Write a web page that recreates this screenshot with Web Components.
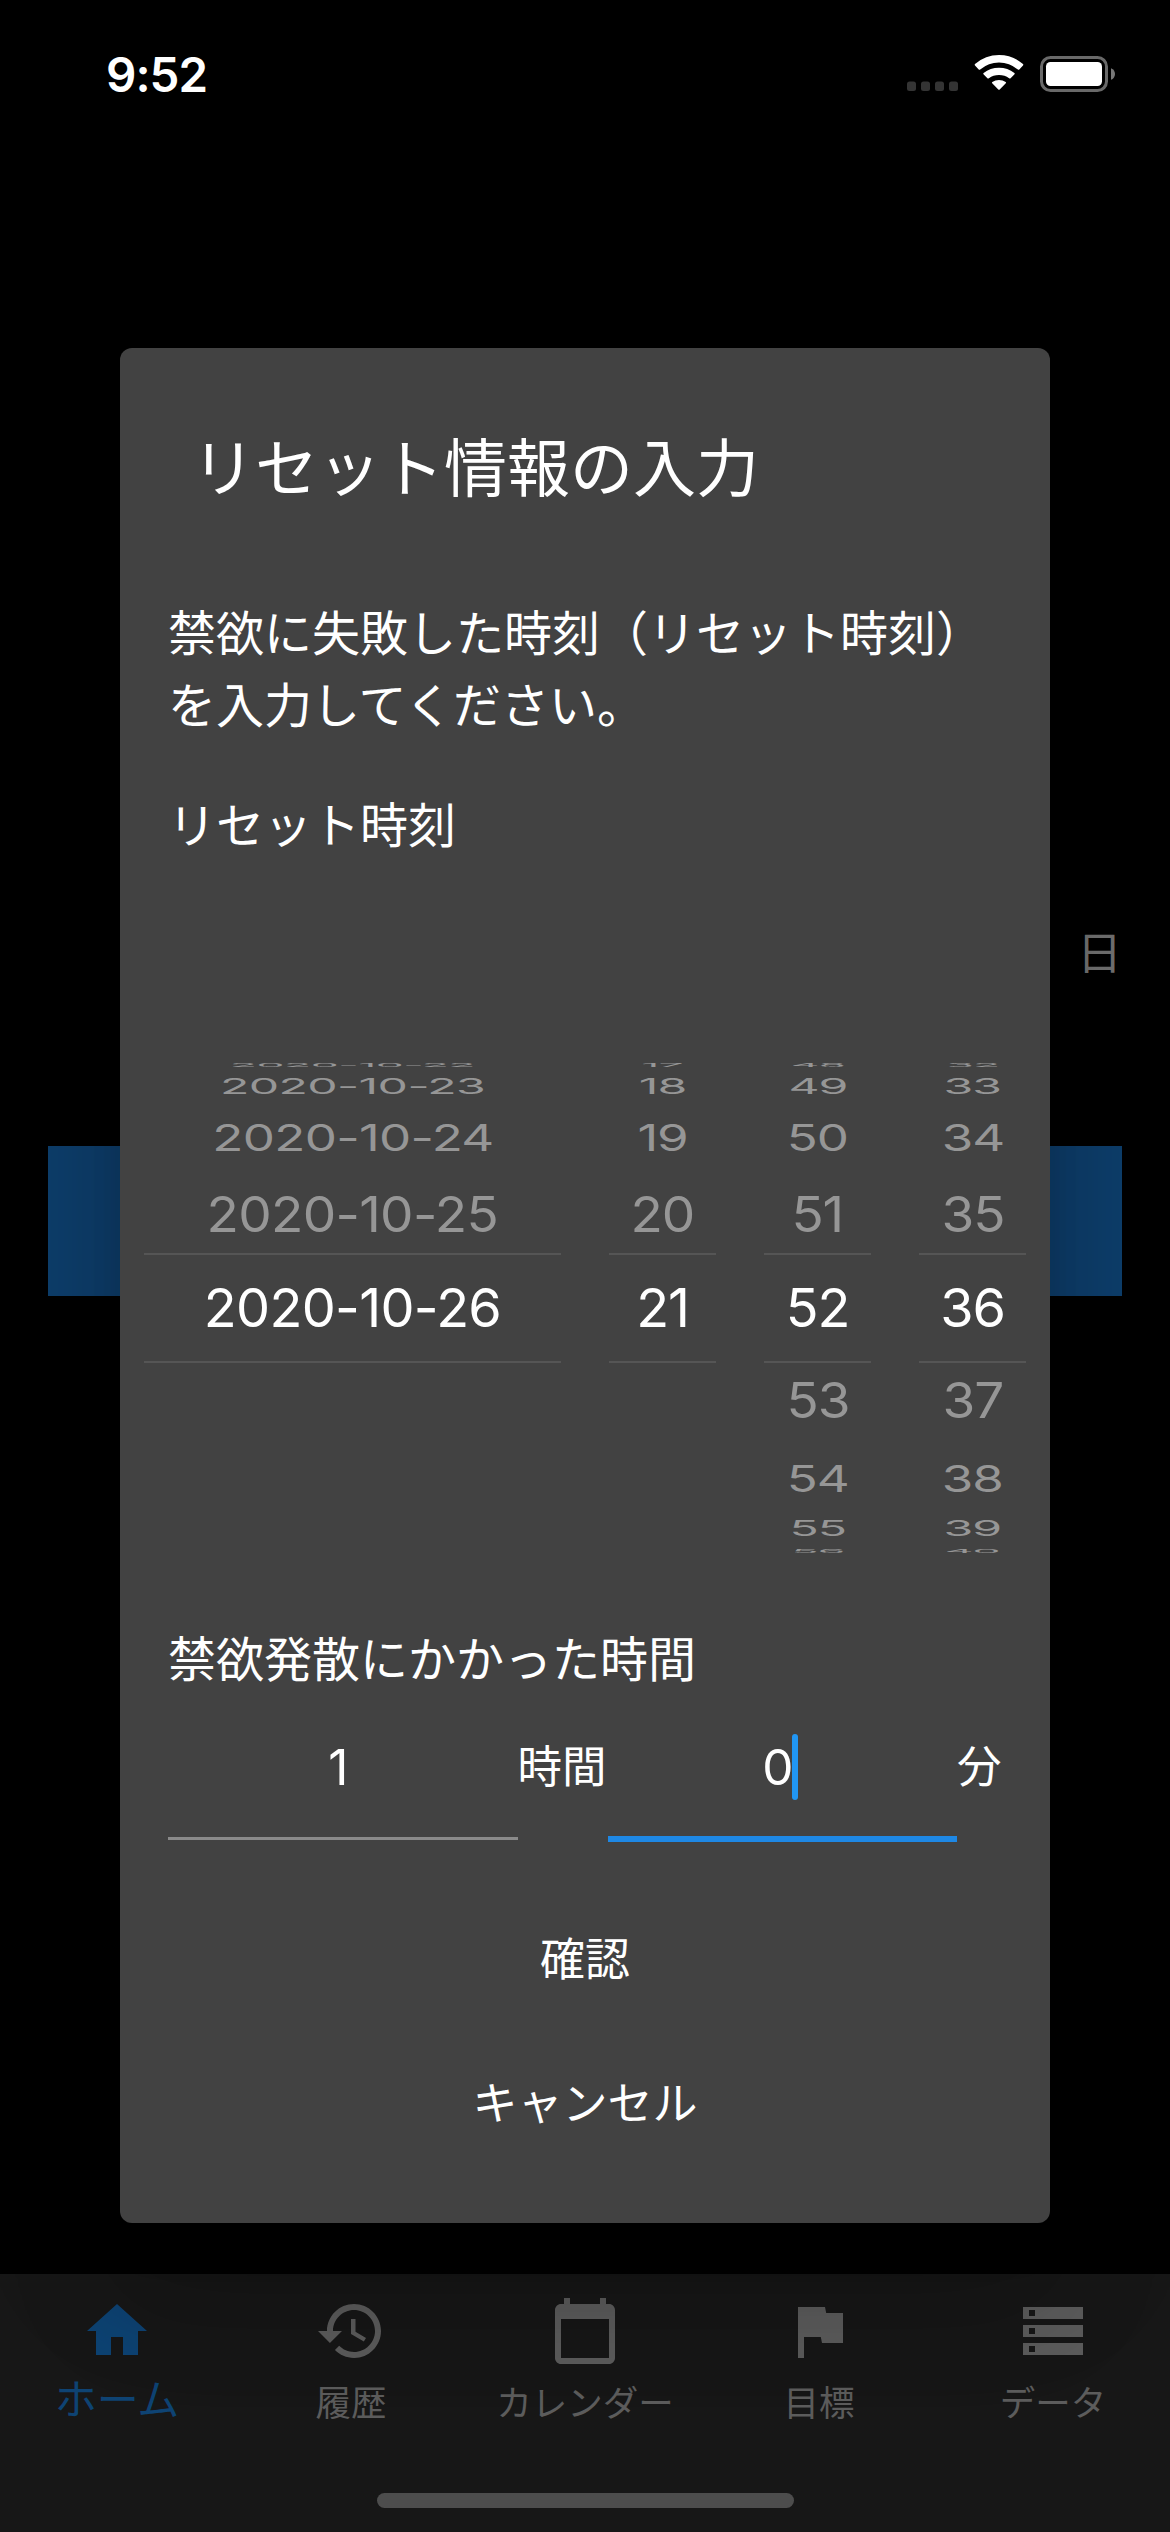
<!DOCTYPE html>
<html lang="ja">
<head>
<meta charset="utf-8">
<meta name="viewport" content="width=device-width">
<title>リセット情報の入力</title>
<style>
  html, body { margin: 0; padding: 0; background: #000; }
  body { width: 1170px; height: 2532px; overflow: hidden; }
</style>
</head>
<body>
<reset-app></reset-app>
<script>
const define = (name, html, setup) => {
  const template = document.createElement('template');
  template.innerHTML = html;
  customElements.define(name, class extends HTMLElement {
    constructor() {
      super();
      this.attachShadow({ mode: 'open' }).append(template.content.cloneNode(true));
    }
    connectedCallback() { if (setup) setup(this, this.shadowRoot); }
  });
};

define('status-bar', `
  <style>
    :host { display: flex; justify-content: space-between; align-items: flex-start; height: 132px; box-sizing: border-box; padding: 44px 55px 0 106px; color: #fff; }
    .time { font-size: 47.500px; font-weight: 600; line-height: 61px; letter-spacing: -1px; }
    .icons { display: flex; padding-top: 9px; }
    svg { display: block; }
  </style>
  <span class="time">9:52</span>
  <span class="icons">
    <svg width="210" height="42" viewBox="0 0 210 42">
      <g fill="#343434">
        <rect x="2" y="28.5" width="9" height="9.5" rx="2.5"/><rect x="16" y="28.5" width="9" height="9.5" rx="2.5"/>
        <rect x="30" y="28.5" width="9" height="9.5" rx="2.5"/><rect x="44" y="28.5" width="9" height="9.5" rx="2.5"/>
      </g>
      <g fill="#fff">
        <path d="M70 12.500Q69.300 11.800 70 11Q80.500 2 94 2Q107.500 2 118 11Q118.700 11.800 118 12.500L114.300 16.500Q113.600 17.200 112.800 16.500Q104.500 9.500 94 9.500Q83.500 9.500 75.200 16.500Q74.400 17.200 73.700 16.500Z"/>
        <path d="M78.500 21.300Q77.800 20.600 78.600 19.900Q85.200 14.700 94 14.700Q102.800 14.700 109.400 19.900Q110.200 20.600 109.500 21.300L105.600 25.200Q104.900 25.800 104.100 25.200Q99.800 22 94 22Q88.200 22 83.900 25.200Q83.100 25.800 82.400 25.200Z"/>
        <path d="M87.200 30.200Q86.500 29.500 87.300 28.900Q90.200 27 94 27Q97.800 27 100.700 28.900Q101.500 29.500 100.800 30.200L94.700 36.400Q94 37.100 93.300 36.400Z"/>
      </g>
      <rect x="136.500" y="4.500" width="65" height="33" rx="9" fill="none" stroke="#696969" stroke-width="3"/>
      <rect x="141" y="9" width="56" height="24" rx="4.500" fill="#fff"/>
      <path d="M206 15.200C208.600 16 210 18.500 210 21S208.600 26 206 26.800Z" fill="#777"/>
    </svg>
  </span>`);

define('home-screen', `
  <style>
    :host { display: flex; flex-direction: column; height: 2142px; }
    .count { display: flex; justify-content: flex-end; margin-top: 786px; padding-right: 48px; font-size: 45px; line-height: 72px; color: #737373; }
    .action { margin: 156px 48px 0; height: 150px; background: #0e3f6d; }
  </style>
  <div class="count">日</div>
  <div class="action"></div>`);

const ICONS = {
  home: 'M10 20v-6h4v6h5v-8h3L12 3 2 12h3v8z',
  history: 'M13 3c-4.970 0-9 4.030-9 9H1l3.890 3.890.070.140L9 12H6c0-3.870 3.130-7 7-7s7 3.130 7 7-3.130 7-7 7c-1.930 0-3.680-.790-4.940-2.060l-1.420 1.420C8.270 19.990 10.510 21 13 21c4.970 0 9-4.030 9-9s-4.030-9-9-9zm-1 5v5l4.280 2.540.720-1.210-3.500-2.080V8H12z',
  calendar: 'M20 3h-1V1h-2v2H7V1H5v2H4c-1.100 0-2 .9-2 2v16c0 1.100.9 2 2 2h16c1.100 0 2-.9 2-2V5c0-1.100-.9-2-2-2zm0 18H4V8h16v13z',
  flag: 'M14.400 6L14 4H5v17h2v-7h5.600l.4 2h7V6z',
  storage: 'M2 20h20v-4H2v4zm2-3h2v2H4v-2zM2 4v4h20V4H2zm4 3H4V5h2v2zm-4 7h20v-4H2v4zm2-3h2v2H4v-2z'
};
define('nav-item', `
  <style>
    :host { display: flex; flex-direction: column; align-items: center; flex: 1; padding-top: 21px; color: #5c5c5c; font-size: 35.500px; }
    :host([active]) { color: #0e4373; font-size: 42px; }
    svg { display: block; width: 72px; height: 72px; fill: currentColor; }
    .label { line-height: 60px; margin-top: 7px; white-space: nowrap; }
    :host([active]) .label { margin-top: 3px; }
  </style>
  <svg viewBox="0 0 24 24"><path/></svg>
  <span class="label"><slot></slot></span>`,
  (el, root) => root.querySelector('path').setAttribute('d', ICONS[el.getAttribute('icon')]));

define('bottom-nav', `
  <style>
    :host { display: flex; flex-direction: column; justify-content: space-between; align-items: center; height: 258px; background: #171717; }
    nav { display: flex; width: 100%; }
    .indicator { width: 417px; height: 15px; border-radius: 8px; background: #4d4d4d; margin-bottom: 24px; }
  </style>
  <nav>
    <nav-item icon="home" active>ホーム</nav-item>
    <nav-item icon="history">履歴</nav-item>
    <nav-item icon="calendar">カレンダー</nav-item>
    <nav-item icon="flag">目標</nav-item>
    <nav-item icon="storage">データ</nav-item>
  </nav>
  <div class="indicator"></div>`);

define('picker-wheel', `
  <style>
    :host { display: grid; height: 490px; grid-template-rows: 11.500px 24.500px 78px 76px 110px 76px 78px 24.500px 11.500px; font-size: 54px; letter-spacing: var(--tracking, -1.200px); color: #969696; }
    div { display: flex; align-items: center; justify-content: center; min-width: 0; min-height: 0; }
    .selected { color: #fff; border: solid #555; border-width: 2px 0; box-sizing: border-box; }
    span { line-height: 1; white-space: nowrap; flex: none; transform: translateY(var(--dy)) scale(var(--sx), var(--sy)); }
  </style>`,
  (el, root) => {
    const sx = [0.826, 0.893, 0.945, 0.983, 1, 0.983, 0.945, 0.893, 0.826];
    const sy = [0.1, 0.389, 0.68, 0.91, 1, 0.91, 0.68, 0.389, 0.1];
    const dy = [-3.7, 0, 0, 0, 0, 0, 1, 0, 3.7];
    el.getAttribute('values').split(',').forEach((value, i) => {
      const row = document.createElement('div');
      if (i === 4) row.className = 'selected';
      if (value) {
        const text = document.createElement('span');
        text.textContent = value;
        text.style.setProperty('--sx', sx[i]);
        text.style.setProperty('--sy', sy[i]);
        text.style.setProperty('--dy', dy[i] + 'px');
        row.append(text);
      }
      root.append(row);
    });
  });

define('date-time-picker', `
  <style>
    :host { display: grid; grid-template-columns: 417px 107px 107px 107px; column-gap: 48px; }
  </style>
  <picker-wheel style="--tracking:-0.700px" values="2020-10-22,2020-10-23,2020-10-24,2020-10-25,2020-10-26,,,,"></picker-wheel>
  <picker-wheel values="17,18,19,20,21,,,,"></picker-wheel>
  <picker-wheel values="48,49,50,51,52,53,54,55,56"></picker-wheel>
  <picker-wheel values="32,33,34,35,36,37,38,39,40"></picker-wheel>`);

define('number-field', `
  <style>
    :host { display: flex; flex: 1; align-items: center; justify-content: center; height: 148px; box-sizing: border-box; padding: 5px 9px 0 0; border-bottom: 3px solid #8a8a8a; margin-bottom: 2px; font-size: 49.500px; }
    :host([focused]) { height: 150px; padding-top: 6px; border-bottom: 6px solid #1e88e5; margin-bottom: 0; }
    .value { position: relative; line-height: 66px; }
    .caret { display: none; position: absolute; left: 100%; top: 0; width: 6px; height: 66px; border-radius: 3px; background: #2196f3; margin-left: -1px; }
    :host([focused]) .caret { display: block; }
  </style>
  <span class="value"><slot></slot><i class="caret"></i></span>`);

define('dialog-button', `
  <style>
    :host { display: flex; align-items: center; justify-content: center; height: 144px; font-size: 45px; line-height: 72px; }
  </style>
  <slot></slot>`);

define('reset-dialog', `
  <style>
    :host { display: flex; flex-direction: column; box-sizing: border-box; width: 930px; height: 1875px; padding-top: 72px; border-radius: 12px; background: #424242; color: #fff; font-size: 48px; line-height: 72px;
      box-shadow: 0 33px 45px -21px rgba(0,0,0,.2), 0 72px 114px 9px rgba(0,0,0,.14), 0 27px 138px 24px rgba(0,0,0,.12); }
    h1 { margin: 0; padding-left: 72px; font-size: 63px; line-height: 96px; font-weight: 400; }
    p { margin: 0 48px; }
    .message { margin-top: 82px; }
    .moment { margin-top: 48px; }
    date-time-picker { margin: 201px 24px 0; }
    .spent { margin-top: 71px; }
    .duration { display: flex; align-items: flex-end; margin: -4px 48px 46px; }
    .unit { font-size: 44.500px; line-height: 151px; height: 150px; flex: none; }
    .h { width: 90px; } .m { width: 45px; }
  </style>
  <h1>リセット情報の入力</h1>
  <p class="message">禁欲に失敗した時刻（リセット時刻）<br>を入力してください。</p>
  <p class="moment">リセット時刻</p>
  <date-time-picker></date-time-picker>
  <p class="spent">禁欲発散にかかった時間</p>
  <div class="duration">
    <number-field>1</number-field><span class="unit h">時間</span>
    <number-field focused>0</number-field><span class="unit m">分</span>
  </div>
  <dialog-button>確認</dialog-button>
  <dialog-button>キャンセル</dialog-button>`);

define('reset-app', `
  <style>
    :host { display: grid; width: 1170px; height: 2532px; overflow: hidden; background: #000; font-family: Inter, "Noto Sans CJK JP", sans-serif; font-weight: 400; }
    .page, .overlay { grid-area: 1 / 1; }
    .page { display: flex; flex-direction: column; }
    .overlay { display: flex; justify-content: center; align-items: flex-start; padding-top: 348px; }
  </style>
  <div class="page">
    <status-bar></status-bar>
    <home-screen></home-screen>
    <bottom-nav></bottom-nav>
  </div>
  <div class="overlay"><reset-dialog></reset-dialog></div>`);
</script>
</body>
</html>
